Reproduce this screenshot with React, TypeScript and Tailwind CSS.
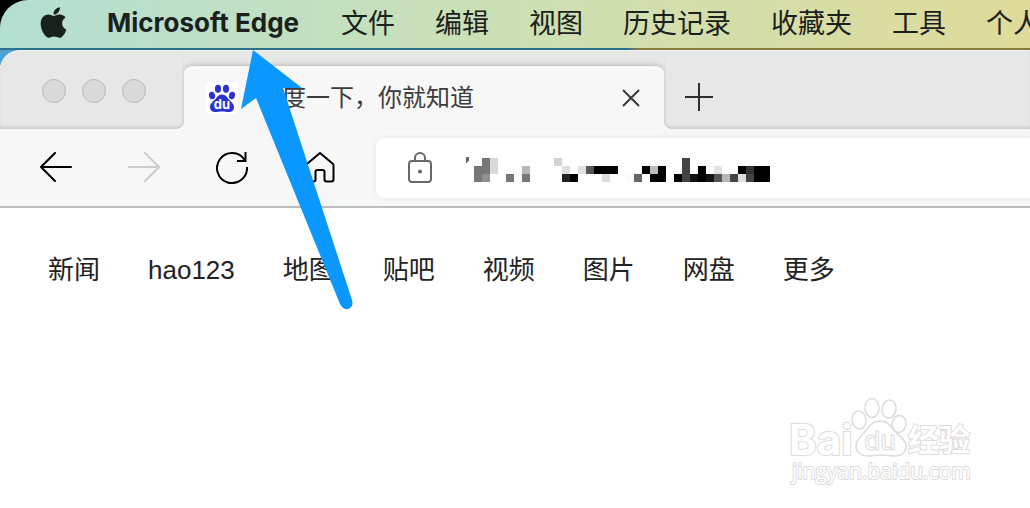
import { FaApple } from 'react-icons/fa';

const menus = ['文件', '编辑', '视图', '历史记录', '收藏夹', '工具', '个人资料'];
const links = ['新闻', 'hao123', '地图', '贴吧', '视频', '图片', '网盘', '更多'];

// Pixelated address: [column, row, colour] on an 8px grid.
const blocks: [number, number, string][] = [
  [1, 0, '#777'], [2, 0, '#d8d8d8'], [10, 0, '#d4d4d4'], [26, 0, '#444'],
  [0, 1, '#777'], [1, 1, '#777'], [2, 1, '#d8d8d8'], [6, 1, '#b8b8b8'], [11, 1, '#dedede'],
  [13, 1, '#e0e0e0'], [14, 1, '#555'], [15, 1, '#000'], [16, 1, '#000'], [17, 1, '#000'],
  [21, 1, '#000'], [22, 1, '#bbb'], [23, 1, '#000'], [26, 1, '#444'], [28, 1, '#000'],
  [30, 1, '#e4e4e4'], [33, 1, '#000'], [34, 1, '#333'], [35, 1, '#000'], [36, 1, '#000'],
  [0, 2, '#777'], [1, 2, '#8f8f8f'], [4, 2, '#777'], [6, 2, '#777'], [11, 2, '#222'],
  [12, 2, '#000'], [16, 2, '#ddd'], [19, 2, '#fbfbfb'], [20, 2, '#666'], [22, 2, '#000'],
  [23, 2, '#000'], [25, 2, '#000'], [26, 2, '#444'], [27, 2, '#111'], [28, 2, '#000'],
  [29, 2, '#151515'], [30, 2, '#555'], [31, 2, '#b8b8b8'], [32, 2, '#444'], [33, 2, '#ddd'],
  [34, 2, '#444'], [35, 2, '#000'], [36, 2, '#000'],
];

function MenuBar() {
  return (
    <header className="bg-black">
      <nav
        aria-label="Menu bar"
        className="flex h-12 items-center overflow-hidden rounded-tl-[28px] bg-linear-to-r from-[#b2dfd2] via-[#cde0b4] to-[#dfdb9a] pl-9 whitespace-nowrap text-[#1a211c]"
      >
        <button aria-label="Apple" className="mr-9 shrink-0 pb-1">
          <FaApple size={35} />
        </button>
        <button className="mr-[42px] shrink-0 pb-0.5 font-['Inter',sans-serif] text-[26px] leading-9 font-bold">
          Microsoft Edge
        </button>
        <div className="flex gap-10 text-[27px] leading-9">
          {menus.map((m) => (
            <button key={m} className="shrink-0">{m}</button>
          ))}
        </div>
      </nav>
    </header>
  );
}

function Favicon() {
  return (
    <svg viewBox="0 0 32 32" className="size-8 shrink-0" aria-hidden="true">
      <rect width="32" height="32" rx="4" fill="#fff" />
      <g fill="#2a33cf">
        <ellipse cx="6" cy="13.5" rx="3" ry="3.8" transform="rotate(-12 6 13.5)" />
        <ellipse cx="12" cy="6.8" rx="3.1" ry="4.1" />
        <ellipse cx="20" cy="6.8" rx="3.1" ry="4.1" />
        <ellipse cx="26" cy="13.5" rx="3" ry="3.8" transform="rotate(12 26 13.5)" />
        <path d="M16 12.500c3 0 4.600 2 6.200 4.200C24.400 19.300 28 21.100 28 25c0 3.200-2 5.100-5 5.100-2.600 0-4.600-.6-7-.6s-4.400.6-7 .6c-3 0-5-1.900-5-5.100 0-3.900 3.600-5.700 5.800-8.300C11.400 14.500 13 12.500 16 12.500z" />
      </g>
      <text x="16" y="27" textAnchor="middle" fill="#fff" className="font-['Inter',sans-serif] text-[13px] font-bold">du</text>
    </svg>
  );
}

function TabStrip() {
  return (
    <div className="flex h-[78px] bg-[#f7f7f7]">
      <div className="flex w-[184px] shrink-0 items-center gap-4 rounded-br-lg bg-[#e7e7e7] pt-0.5 pl-[42px] shadow-[inset_0_-3px_3px_-1px_rgba(0,0,0,0.12)]">
        {['Close window', 'Minimize window', 'Zoom window'].map((l) => (
          <button key={l} aria-label={l} className="size-6 rounded-full border border-[#b9b9b9] bg-[#d9d9d9]" />
        ))}
      </div>
      <div className="w-[480px] bg-[#e7e7e7] pt-[15px]">
        <div className="relative flex h-full items-center rounded-t-lg bg-[#f7f7f7] pr-6 pl-[22px] shadow-[0_-2px_4px_-1px_rgba(0,0,0,0.22)]">
          <Favicon />
          <span className="ml-5 flex-1 text-2xl text-[#3c3c3c]">百度一下，你就知道</span>
          <button aria-label="Close tab">
            <svg viewBox="0 0 18 18" className="size-[18px]" fill="none" stroke="#3a3a3a" strokeWidth="2">
              <path d="M1 1l16 16M17 1L1 17" />
            </svg>
          </button>
        </div>
      </div>
      <div className="flex flex-1 items-center rounded-bl-lg bg-[#e7e7e7] pt-3.5 pl-[21px] shadow-[inset_0_-3px_3px_-1px_rgba(0,0,0,0.12)]">
        <button aria-label="New tab">
          <svg viewBox="0 0 28 28" className="size-7" fill="none" stroke="#2e2e2e" strokeWidth="2">
            <path d="M14 0v28M0 14h28" />
          </svg>
        </button>
      </div>
    </div>
  );
}

const iconButton = 'flex size-12 shrink-0 items-center justify-center';

function Toolbar() {
  return (
    <div className="flex h-[79px] items-center border-b-2 border-[#bdbdbd] bg-[#f7f7f7] pl-8">
      <div className="flex gap-10">
        <button aria-label="Back" className={iconButton}>
          <svg viewBox="0 0 32 32" className="size-8" fill="none" stroke="#000" strokeWidth="2" strokeLinecap="round">
            <path d="M15 1L1 15l14 14M1 15h30" />
          </svg>
        </button>
        <button aria-label="Forward" className={iconButton} disabled>
          <svg viewBox="0 0 32 32" className="size-8" fill="none" stroke="#cdcdcd" strokeWidth="2" strokeLinecap="round">
            <path d="M17 1l14 14-14 14M31 15H1" />
          </svg>
        </button>
        <button aria-label="Reload" className={iconButton}>
          <svg viewBox="0 0 32 32" className="size-8" fill="none" stroke="#000" strokeWidth="2">
            <path d="M31 15A15 15 0 1 1 28.700 8M29.500 0v9H21" />
          </svg>
        </button>
        <button aria-label="Home" className={iconButton}>
          <svg viewBox="0 0 32 32" className="size-8" fill="none" stroke="#000" strokeWidth="2" strokeLinejoin="round">
            <path d="M16 1L3.200 11.700q-.7.600-.7 1.500V27.500a2 2 0 0 0 2 2h5a2 2 0 0 0 2-2V20a2 2 0 0 1 2-2h5a2 2 0 0 1 2 2v7.500a2 2 0 0 0 2 2h5a2 2 0 0 0 2-2V13.200q0-.9-.7-1.500z" />
          </svg>
        </button>
      </div>
      <label className="ml-8 flex h-[60px] flex-1 items-center rounded-l-lg bg-white pl-8 shadow-[0_0_6px_rgba(0,0,0,0.07)]">
        <svg viewBox="0 0 24 31" className="h-[31px] w-6 shrink-0" fill="none" stroke="#686868" strokeWidth="2" aria-hidden="true">
          <rect x="1" y="9" width="22" height="21" rx="3" />
          <path d="M7 9V6a5 5 0 0 1 10 0v3" />
          <circle cx="12" cy="19.500" r="2" fill="#686868" stroke="none" />
        </svg>
        <svg viewBox="-8 -2 304 28" className="mt-1 ml-[34px] h-7 w-[304px] shrink-0" aria-hidden="true" shapeRendering="crispEdges">
          <path d="M-8-1h3v3l-2 3h-1z" fill="#666" />
          {blocks.map(([x, y, c]) => (
            <rect key={`${x}-${y}`} x={x * 8} y={y * 8} width="8" height="8" fill={c} />
          ))}
        </svg>
        <input aria-label="Address" className="h-full min-w-0 flex-1 bg-transparent outline-none" />
      </label>
    </div>
  );
}

function Watermark() {
  return (
    <svg viewBox="0 0 190 92" className="absolute top-[187px] right-[54px] w-[190px]" fill="#fff" stroke="#dcdcdc" strokeWidth="1">
      <text x="3" y="60" className="font-['Inter',sans-serif] text-[42px] font-bold" strokeWidth="2" paintOrder="stroke">Bai</text>
      <g strokeWidth="1.500">
        <ellipse cx="73" cy="25" rx="7" ry="9" transform="rotate(-8 73 25)" />
        <ellipse cx="86" cy="13" rx="7" ry="9.500" />
        <ellipse cx="103" cy="14" rx="7" ry="9" transform="rotate(10 103 14)" />
        <ellipse cx="113" cy="29" rx="7" ry="8.500" transform="rotate(8 113 29)" />
        <path d="M94 26c6 0 9 3 13 8 4 6 13 10 13 17 0 7-5 10-11 10-5 0-9-1-14-1s-9 1-14 1c-6 0-11-4-11-10 0-7 7-11 11-17 4-5 7-8 13-8z" />
      </g>
      <text x="94" y="55" textAnchor="middle" className="font-['Inter',sans-serif] text-[26px] font-medium">du</text>
      <text x="122" y="56" className="font-['Noto_Sans_CJK_SC',sans-serif] text-[31px] font-bold" strokeWidth="2" paintOrder="stroke">经验</text>
      <text x="6" y="84" className="font-['Open_Sans',sans-serif] text-[21px]" strokeWidth="2" paintOrder="stroke">jingyan.baidu.com</text>
    </svg>
  );
}

function Pointer() {
  return (
    <svg viewBox="0 0 112 260" className="pointer-events-none absolute top-[50px] left-[241px] w-28" aria-hidden="true">
      <path d="M12 0L61 38H42L111 250q2 7-4 9-5 1-8-5L15 48 0 59z" fill="#0a98ff" />
    </svg>
  );
}

export default function App() {
  return (
    <div className="relative flex min-h-screen flex-col overflow-hidden bg-white font-['Liberation_Sans','Noto_Sans_CJK_SC',sans-serif]">
      <MenuBar />
      <div className="flex flex-1 flex-col bg-linear-to-r from-[#4ba3d4] from-2% via-[#2b6a80] via-2% to-[#89783a]">
        <div className="h-[2px] bg-linear-to-r from-[#2d6f8c] from-61% to-[#8a7a3c] to-62%" />
        <div className="flex flex-1 flex-col overflow-hidden rounded-tl-[20px] border-t border-[#eef4f4] bg-white">
          <TabStrip />
          <Toolbar />
          <main className="relative flex-1">
            <nav aria-label="Baidu" className="flex gap-12 px-12 pt-11 text-[26px] leading-9 whitespace-nowrap text-[#222]">
              {links.map((l) => (
                <a key={l} href="#">{l}</a>
              ))}
            </nav>
            <Watermark />
          </main>
        </div>
      </div>
      <Pointer />
    </div>
  );
}
